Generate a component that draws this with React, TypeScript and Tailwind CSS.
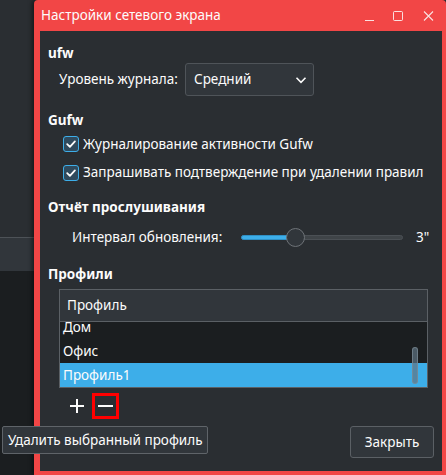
import React from "react";

const font = { fontFamily: '"Noto Sans", "DejaVu Sans", sans-serif' };

function Check() {
  return (
    <div className="w-[16px] h-[16px] rounded-[3px] border border-[#3daee9] bg-[#2f4a5d] flex items-center justify-center shrink-0">
      <svg width="12" height="12" viewBox="0 0 12 12">
        <path d="M2.2 6.2 L4.9 8.8 L9.9 3.4" fill="none" stroke="#fcfcfc" strokeWidth="1.8" strokeLinecap="round" strokeLinejoin="round" />
      </svg>
    </div>
  );
}

export default function App() {
  return (
    <div className="relative w-[446px] h-[475px] overflow-hidden text-[13.5px] text-[#fcfcfc]" style={font}>
      <div className="flex flex-col h-full">
        <div className="h-[237px] bg-[#2a2e32]" />
        <div className="h-px bg-[#4d5257]" />
        <div className="h-[33px] bg-[#31363b]" />
        <div className="flex-1 bg-[#1b1e20]" />
      </div>

      <div className="absolute left-[34px] top-0 w-[412px] h-[475px] bg-[#f24646] rounded-t-[4px] flex flex-col shadow-[-2px_0_4px_rgba(0,0,0,0.5)]">
        <div className="h-[31px] flex items-center pl-[7px] relative">
          <span className="leading-none text-[#fcfcfc]">Настройки сетевого экрана</span>
          <svg className="absolute left-[330px] top-[10px]" width="12" height="12" viewBox="0 0 12 12">
            <path d="M1 10.5 H10" stroke="#fcfcfc" strokeWidth="1" opacity="0.85" />
          </svg>
          <svg className="absolute left-[359px] top-[10px]" width="12" height="12" viewBox="0 0 12 12">
            <rect x="0.5" y="1.5" width="9" height="9" rx="1" fill="none" stroke="#fcfcfc" strokeWidth="1" opacity="0.85" />
          </svg>
          <svg className="absolute left-[389px] top-[10px]" width="12" height="12" viewBox="0 0 12 12">
            <path d="M1 1.5 L10 10.5 M10 1.5 L1 10.5" stroke="#fcfcfc" strokeWidth="1.1" opacity="0.85" />
          </svg>
        </div>

        <div className="flex-1 ml-[6px] mr-[4px] mb-[4px] bg-[#2a2e32] flex flex-col">
          <div className="h-[13px]" />
          <div className="h-[19px] pl-[8px] flex items-center font-bold leading-none">ufw</div>
          <div className="h-[33px] pl-[19px] flex items-center">
            <span className="w-[126px]">Уровень журнала:</span>
            <div className="w-[129px] h-[33px] rounded-[3px] border border-[#4f5459] bg-[#31363b] flex items-center pl-[8px] pr-[6px] justify-between">
              <span>Средний</span>
              <svg width="12" height="12" viewBox="0 0 12 12">
                <path d="M1.5 3.8 L6 8.3 L10.5 3.8" fill="none" stroke="#fcfcfc" strokeWidth="1.6" />
              </svg>
            </div>
          </div>

          <div className="h-[14px]" />
          <div className="h-[20px] pl-[8px] flex items-center font-bold">Gufw</div>
          <div className="h-[28px] pl-[23px] flex items-center gap-[4px]">
            <Check />
            <span>Журналирование активности Gufw</span>
          </div>
          <div className="h-[29px] pl-[23px] flex items-center gap-[4px]">
            <Check />
            <span>Запрашивать подтверждение при удалении правил</span>
          </div>

          <div className="h-[10px]" />
          <div className="h-[20px] pl-[8px] flex items-center font-bold">Отчёт прослушивания</div>
          <div className="h-[7px]" />
          <div className="h-[26px] pl-[32px] flex items-center">
            <span className="w-[169px]">Интервал обновления:</span>
            <div className="relative w-[162px] h-[5px] rounded-full bg-[#3f4448] border border-[#4b5055]">
              <div className="absolute left-[-1px] top-[-1px] h-[5px] w-[52px] rounded-full bg-[#3daee9] border border-[#2f8fc4]" />
              <div className="absolute left-[44px] top-[-8px] w-[19px] h-[19px] rounded-full bg-[#31363b] border border-[#6e7378]" />
            </div>
            <span className="ml-[13px]">3"</span>
          </div>

          <div className="h-[14px]" />
          <div className="h-[20px] pl-[8px] flex items-center font-bold">Профили</div>
          <div className="h-[5px]" />
          <div className="ml-[19px] mr-[14px] h-[99px] border border-[#5b6065] flex flex-col">
            <div className="h-[32px] bg-[#31363b] border-b border-[#5b6065] flex items-center pl-[7px] shrink-0">Профиль</div>
            <div className="relative flex-1 bg-[#1b1e20] overflow-hidden">
              <div className="mt-[-7px]">
                <div className="h-[24px] flex items-center pl-[3px]">Дом</div>
                <div className="h-[24px] flex items-center pl-[3px]">Офис</div>
                <div className="h-[24px] flex items-center pl-[3px] bg-[#3daee9]">Профиль1</div>
              </div>
              <div className="absolute left-[352px] top-[25px] w-[6px] h-[37px] rounded-full bg-[#5f7383]/70 border border-[#7c8b96]/70" />
            </div>
          </div>

          <div className="h-[5px]" />
          <div className="h-[26px] flex items-center pl-[30px]">
            <svg width="14" height="14" viewBox="0 0 14 14">
              <path d="M7 0 V14 M0 7 H14" stroke="#fcfcfc" strokeWidth="2" />
            </svg>
            <div className="ml-[8px] w-[27px] h-[26px] border-[3px] border-[#ff0000] flex items-center justify-center">
              <svg width="15" height="4" viewBox="0 0 15 4">
                <path d="M0 2 H15" stroke="#fcfcfc" strokeWidth="2" />
              </svg>
            </div>
          </div>

          <div className="h-[7px]" />
          <div className="flex justify-end pr-[8px]">
            <div className="w-[84px] h-[32px] rounded-[3px] border border-[#5b6065] bg-[#31363b] flex items-center justify-center">
              Закрыть
            </div>
          </div>
        </div>
      </div>

      <div className="absolute left-[2px] top-[426px] w-[206px] h-[28px] bg-[#31363b] border border-[#5f6469] rounded-[2px] flex items-center pl-[5px]">
        Удалить выбранный профиль
      </div>
    </div>
  );
}
